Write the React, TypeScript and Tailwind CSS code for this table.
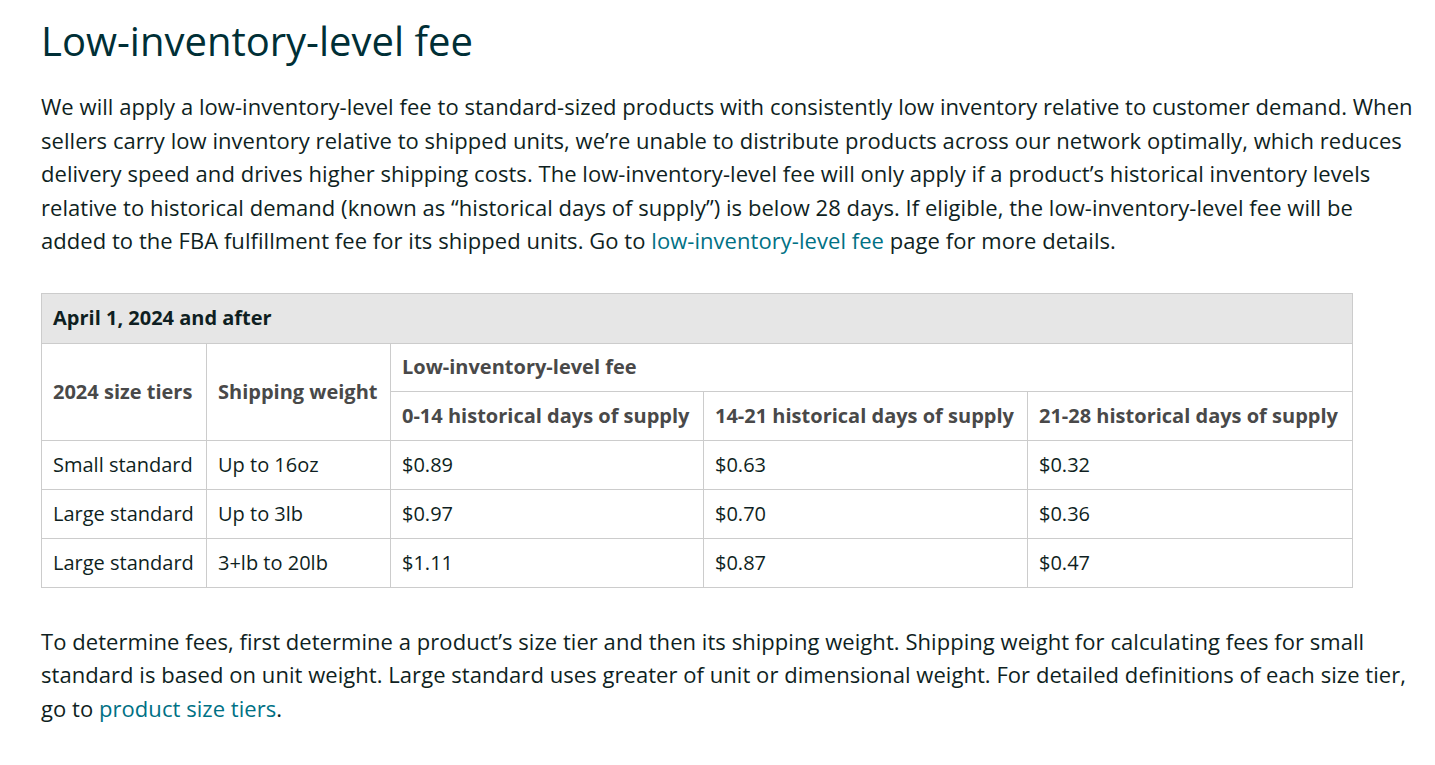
import React from 'react';

const rows = [
  { tier: 'Small standard', weight: 'Up to 16oz', a: '$0.89', b: '$0.63', c: '$0.32' },
  { tier: 'Large standard', weight: 'Up to 3lb', a: '$0.97', b: '$0.70', c: '$0.36' },
  { tier: 'Large standard', weight: '3+lb to 20lb', a: '$1.11', b: '$0.87', c: '$0.47' },
];

const cell = 'border border-[#cccccc] px-[11px] text-left align-middle';
const head = `${cell} font-bold text-[#494949] whitespace-nowrap`;

export default function App() {
  return (
    <div className="min-h-screen bg-white text-[#0f1f22] font-['Open_Sans','Liberation_Sans',sans-serif]">
      <div className="pl-[41px] pt-[17px] w-[1417px]">
        <h1 className="text-[40px] leading-[48px] text-[#002f36] font-normal">Low-inventory-level fee</h1>

        <p className="mt-[25px] text-[22px] leading-[33.5px] tracking-[0.05px]">
          We will apply a low-inventory-level fee to standard-sized products with consistently low inventory relative to customer demand. When
          sellers carry low inventory relative to shipped units, we’re unable to distribute products across our network optimally, which reduces
          delivery speed and drives higher shipping costs. The low-inventory-level fee will only apply if a product’s historical inventory levels
          relative to historical demand (known as “historical days of supply”) is below 28 days. If eligible, the low-inventory-level fee will be
          added to the FBA fulfillment fee for its shipped units. Go to{' '}
          <a href="#" className="text-[#007185]">low-inventory-level fee</a> page for more details.
        </p>

        {/* Fee table */}
        <table className="mt-[35px] w-[1311px] border-collapse text-[20px] table-fixed">
          <colgroup>
            <col className="w-[165px]" />
            <col className="w-[184px]" />
            <col className="w-[313px]" />
            <col className="w-[324px]" />
            <col className="w-[325px]" />
          </colgroup>
          <thead>
            <tr className="h-[50px] bg-[#e6e6e6]">
              <th colSpan={5} className={`${cell} font-bold text-[#0f1f22]`}>April 1, 2024 and after</th>
            </tr>
            <tr className="h-[48px]">
              <th rowSpan={2} className={head}>2024 size tiers</th>
              <th rowSpan={2} className={head}>Shipping weight</th>
              <th colSpan={3} className={head}>Low-inventory-level fee</th>
            </tr>
            <tr className="h-[49px]">
              <th className={head}>0-14 historical days of supply</th>
              <th className={head}>14-21 historical days of supply</th>
              <th className={head}>21-28 historical days of supply</th>
            </tr>
          </thead>
          <tbody>
            {rows.map((r, i) => (
              <tr key={i} className="h-[49px]">
                <td className={`${cell} whitespace-nowrap`}>{r.tier}</td>
                <td className={`${cell} whitespace-nowrap`}>{r.weight}</td>
                <td className={cell}>{r.a}</td>
                <td className={cell}>{r.b}</td>
                <td className={cell}>{r.c}</td>
              </tr>
            ))}
          </tbody>
        </table>

        <p className="mt-[37px] text-[22px] leading-[33.5px] tracking-[0.05px]">
          To determine fees, first determine a product’s size tier and then its shipping weight. Shipping weight for calculating fees for small
          standard is based on unit weight. Large standard uses greater of unit or dimensional weight. For detailed definitions of each size tier,
          go to <a href="#" className="text-[#007185]">product size tiers</a>.
        </p>
      </div>
    </div>
  );
}
